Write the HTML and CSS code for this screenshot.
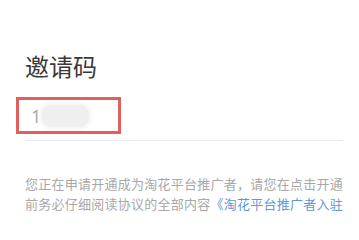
FILE: index.html
```html
<!DOCTYPE html>
<html lang="zh-CN">
<head>
<meta charset="utf-8">
<link rel="stylesheet" href="styles.css">
</head>
<body>
<div class="page">
  <h1 class="title">邀请码</h1>
  <div class="field">
    <span class="code">1</span><span class="blur"></span>
    <div class="mark"></div>
  </div>
  <p class="note">您正在申请开通成为淘花平台推广者，请您在点击开通前务必仔细阅读协议的全部内容<span class="link">《淘花平台推广者入驻协议》</span>，并确认同意协议的全部条款。</p>
</div>
</body>
</html>
```
FILE: styles.css
```css
html, body {
  margin: 0;
  padding: 0;
  background: #ffffff;
}
body {
  font-family: "Noto Sans CJK SC", "Noto Sans", sans-serif;
  width: 359px;
  height: 216px;
  overflow: hidden;
}
.page {
  padding: 54px 12px 0 25px;
}
.title {
  margin: 0;
  font-size: 24px;
  line-height: 24px;
  font-weight: 400;
  color: #3a3a3a;
}
.field {
  position: relative;
  margin-top: 19px;
  margin-right: 4px;
  padding: 10px 0 15px 6px;
  border-bottom: 1px solid #ebebeb;
  display: flex;
  align-items: center;
  height: 18px;
}
.code {
  font-size: 18px;
  line-height: 18px;
  color: #a9a9a9;
  font-family: "Noto Sans", sans-serif;
}
.blur {
  display: inline-block;
  width: 47px;
  height: 22px;
  margin-left: 1px;
  border-radius: 10px;
  background: #efefef;
  box-shadow: 0 0 4px 2px #f3f3f3;
}
.mark {
  position: absolute;
  left: -9px;
  top: 0;
  width: 99px;
  height: 31px;
  border: 3px solid #e06060;
}
.note {
  margin: 33px 0 0 0;
  font-size: 13px;
  line-height: 20px;
  letter-spacing: 0.25px;
  color: #a8a8a8;
}
.link {
  color: #5d9ad6;
}
```
